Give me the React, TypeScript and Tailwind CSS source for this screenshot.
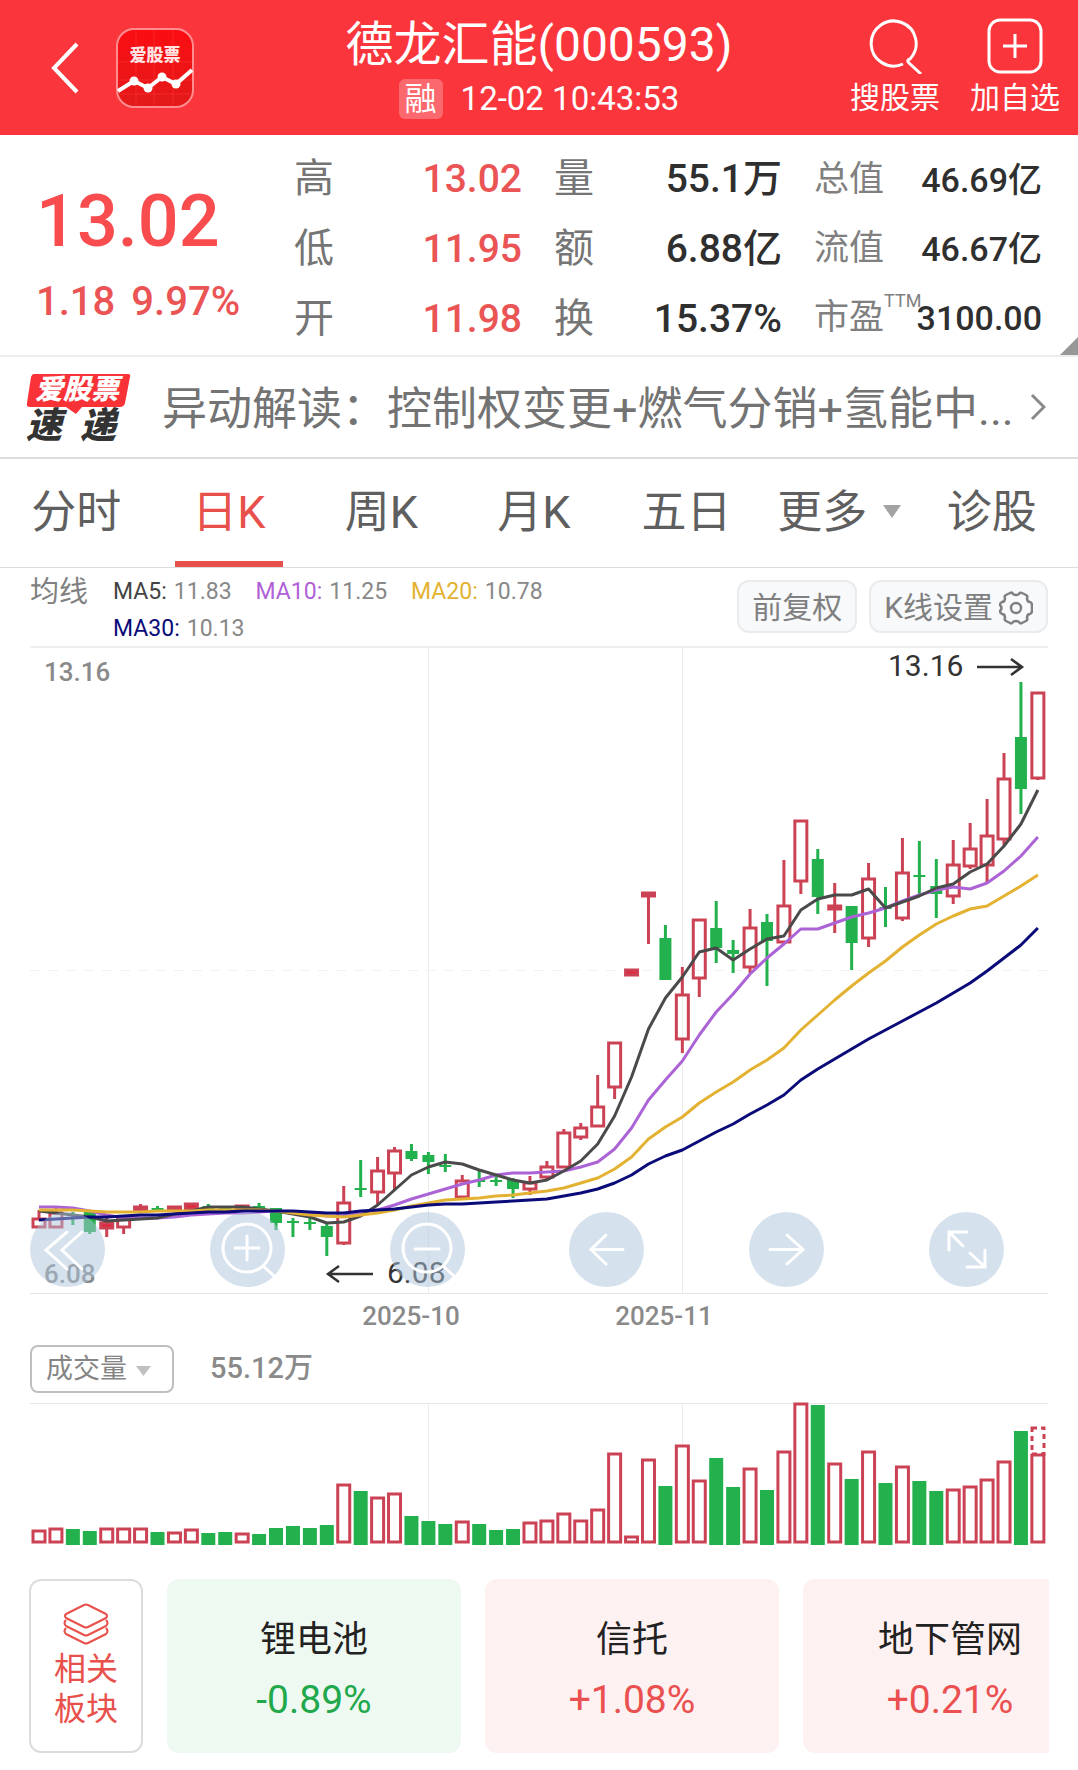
import type { ReactNode } from 'react'

type Side = 'up' | 'down'
type Candle = [side: Side, high: number, top: number, bottom: number, low: number]

const STEP = 16.93
const FIRST_X = 39
const RED = '#cc4255'
const GREEN = '#22b14c'

// high, body top, body bottom and low, in chart units
const candles: Candle[] = [
  ['up', 1210, 1219, 1227, 1227],
  ['up', 1207, 1213, 1227, 1227],
  ['down', 1212, 1214, 1216, 1225],
  ['down', 1211, 1212, 1232, 1234],
  ['up', 1218, 1223, 1228, 1237],
  ['up', 1216, 1217, 1227, 1234],
  ['up', 1204, 1207, 1210, 1211],
  ['down', 1206, 1208, 1211, 1211],
  ['up', 1206, 1207, 1210, 1210],
  ['up', 1203, 1204, 1209, 1216],
  ['down', 1204, 1206, 1209, 1210],
  ['down', 1207, 1208, 1210, 1211],
  ['up', 1205, 1206, 1208, 1210],
  ['down', 1203, 1206, 1209, 1211],
  ['down', 1208, 1208, 1223, 1230],
  ['down', 1218, 1221, 1223, 1237],
  ['down', 1217, 1222, 1224, 1230],
  ['down', 1223, 1226, 1237, 1256],
  ['up', 1186, 1203, 1243, 1245],
  ['down', 1160, 1188, 1190, 1197],
  ['up', 1157, 1171, 1192, 1204],
  ['up', 1147, 1151, 1173, 1190],
  ['down', 1144, 1151, 1159, 1161],
  ['down', 1152, 1155, 1162, 1174],
  ['down', 1154, 1165, 1167, 1172],
  ['up', 1175, 1181, 1197, 1197],
  ['down', 1171, 1180, 1182, 1187],
  ['down', 1177, 1180, 1182, 1186],
  ['down', 1178, 1180, 1189, 1198],
  ['up', 1176, 1183, 1189, 1195],
  ['up', 1161, 1167, 1177, 1180],
  ['up', 1129, 1133, 1167, 1167],
  ['up', 1123, 1128, 1137, 1140],
  ['up', 1075, 1107, 1126, 1126],
  ['up', 1043, 1043, 1087, 1099],
  ['up', 970, 970, 975, 975],
  ['up', 892, 893, 896, 944],
  ['down', 925, 938, 980, 980],
  ['up', 967, 995, 1039, 1053],
  ['up', 920, 920, 978, 997],
  ['down', 901, 928, 948, 963],
  ['down', 940, 950, 954, 973],
  ['up', 909, 928, 967, 973],
  ['down', 914, 922, 941, 986],
  ['up', 860, 906, 942, 942],
  ['up', 821, 821, 881, 894],
  ['down', 849, 859, 897, 914],
  ['up', 883, 906, 909, 933],
  ['down', 906, 906, 943, 970],
  ['up', 863, 879, 938, 947],
  ['down', 887, 907, 909, 927],
  ['up', 838, 873, 918, 921],
  ['down', 841, 875, 877, 895],
  ['down', 859, 886, 894, 918],
  ['up', 840, 865, 896, 904],
  ['up', 823, 849, 866, 869],
  ['up', 799, 836, 865, 883],
  ['up', 753, 779, 839, 845],
  ['down', 682, 737, 789, 814],
  ['up', 693, 693, 778, 780],
]

const averages = [
  {
    color: '#ab63d6',
    points: [
      1207, 1207, 1208, 1211, 1215, 1218, 1218, 1218, 1217, 1215, 1214, 1213, 1213, 1212, 1211, 1213, 1214, 1216, 1216,
      1213, 1210, 1205, 1199, 1194, 1189, 1184, 1180, 1175, 1173, 1173, 1172, 1171, 1167, 1162, 1149, 1128, 1100, 1080,
      1061, 1035, 1012, 994, 974, 958, 944, 929, 929, 923, 917, 913, 908, 901, 895, 890, 887, 889, 883, 871, 856, 837,
    ],
  },
  {
    color: '#4a4a4a',
    points: [
      1211, 1213, 1215, 1217, 1221, 1220, 1219, 1218, 1214, 1211, 1207, 1207, 1207, 1209, 1211, 1214, 1217, 1223, 1222,
      1216, 1205, 1190, 1175, 1167, 1162, 1164, 1170, 1175, 1180, 1183, 1180, 1171, 1161, 1144, 1116, 1077, 1029, 998,
      977, 952, 948, 960, 949, 939, 936, 910, 899, 895, 895, 889, 908, 902, 896, 888, 884, 872, 864, 846, 824, 790,
    ],
  },
  {
    color: '#e3b232',
    points: [
      1210, 1210, 1210, 1211, 1212, 1212, 1212, 1211, 1211, 1211, 1210, 1210, 1210, 1210, 1211, 1213, 1215, 1216, 1217,
      1215, 1213, 1210, 1206, 1203, 1200, 1199, 1198, 1196, 1195, 1193, 1191, 1188, 1183, 1178, 1169, 1157, 1139, 1127,
      1117, 1103, 1092, 1082, 1070, 1060, 1048, 1030, 1015, 1000, 986, 973, 961, 947, 935, 924, 916, 909, 906, 896, 886,
      875,
    ],
  },
  {
    color: '#0a0a78',
    points: [
      1220, 1219, 1218, 1217, 1217, 1216, 1215, 1215, 1214, 1213, 1212, 1212, 1211, 1211, 1211, 1211, 1212, 1213, 1213,
      1211, 1210, 1209, 1207, 1205, 1204, 1204, 1203, 1202, 1201, 1200, 1199, 1196, 1193, 1189, 1183, 1175, 1164, 1156,
      1150, 1141, 1132, 1124, 1114, 1105, 1095, 1080, 1069, 1059, 1049, 1039, 1030, 1021, 1012, 1003, 993, 983, 971,
      958, 945, 928,
    ],
  },
]

const volumes = [
  15, 17, 16, 14, 17, 17, 17, 13, 13, 16, 12, 13, 12, 11, 17, 19, 17, 20, 61, 54, 48, 52, 29, 24, 21, 24, 21, 15, 16,
  23, 25, 32, 25, 36, 92, 9, 86, 59, 100, 65, 87, 58, 77, 55, 94, 142, 140, 82, 66, 94, 62, 79, 64, 54, 56, 59, 66, 84,
  114, 91,
]

const quoteColumns = [
  [
    { label: '高', value: '13.02' },
    { label: '低', value: '11.95' },
    { label: '开', value: '11.98' },
  ],
  [
    { label: '量', value: '55.1万' },
    { label: '额', value: '6.88亿' },
    { label: '换', value: '15.37%' },
  ],
]

const marketValues = [
  { label: '总值', value: '46.69亿' },
  { label: '流值', value: '46.67亿' },
  { label: '市盈', note: 'TTM', value: '3100.00' },
]

const tabs = ['分时', '日K', '周K', '月K', '五日', '更多', '诊股']

const maLegend = [
  { name: 'MA5:', value: '11.83', color: 'text-[#444444]' },
  { name: 'MA10:', value: '11.25', color: 'text-[#b061d6]' },
  { name: 'MA20:', value: '10.78', color: 'text-[#e3b232]' },
  { name: 'MA30:', value: '10.13', color: 'text-[#0a0a78]' },
]

const sectors = [
  { name: '锂电池', change: '-0.89%', box: 'bg-[#eef9f2]', text: 'text-[#21a84b]' },
  { name: '信托', change: '+1.08%', box: 'bg-[#fef1f1]', text: 'text-[#ea504f]' },
  { name: '地下管网', change: '+0.21%', box: 'bg-[#fef1f1]', text: 'text-[#ea504f]' },
]

const centerX = (i: number) => FIRST_X + i * STEP

function Header() {
  return (
    <header className="grid h-[135px] grid-cols-[1fr_auto_1fr] items-center bg-[#fa363c] text-white">
      <div className="flex items-center gap-[36px] pl-[50px]">
        <button type="button" aria-label="返回">
          <svg className="h-[54px] w-[30px]" viewBox="0 0 30 54" fill="none" stroke="currentColor" strokeWidth="4">
            <path d="M27 3L4 27L27 51" />
          </svg>
        </button>
        <a href="#home" aria-label="爱股票">
          <svg className="h-[80px] w-[78px]" viewBox="0 0 78 80">
            <defs>
              <linearGradient id="logo" x1="0" y1="0" x2="0" y2="1">
                <stop offset="0" stopColor="#fb0d12" />
                <stop offset="1" stopColor="#e21a1a" />
              </linearGradient>
            </defs>
            <rect x="1" y="1" width="76" height="78" rx="17" fill="url(#logo)" stroke="#ff8d90" strokeWidth="2" />
            <path d="M2 34H76M2 52H76M2 66H76M20 2V78M38 2V78M57 2V78" stroke="#ff3a3a" strokeOpacity="0.5" />
            <text x="39" y="33" textAnchor="middle" fontSize="17" fontWeight="900" fill="#ffe3e3">
              爱股票
            </text>
            <path d="M2 63L18 53L32 60L46 49L60 56L76 42" fill="none" stroke="#fff" strokeWidth="4" />
            <g fill="#fff">
              <circle cx="18" cy="53" r="4.5" />
              <circle cx="32" cy="60" r="4.5" />
              <circle cx="46" cy="49" r="4.5" />
              <circle cx="60" cy="56" r="4.5" />
            </g>
          </svg>
        </a>
      </div>
      <div className="text-center">
        <h1 className="text-[48px] leading-[58px]">德龙汇能(000593)</h1>
        <p className="mt-[5px] flex items-center justify-center gap-[18px] text-[33px] leading-[40px]">
          <span className="rounded-md bg-white/25 px-[6px] text-[32px]">融</span>
          12-02 10:43:53
        </p>
      </div>
      <div className="flex justify-end gap-[30px] pr-[18px] text-[30px] leading-[38px]">
        <button type="button" className="flex flex-col items-center gap-[5px]">
          <svg className="h-[56px] w-[56px]" viewBox="0 0 56 56" fill="none" stroke="currentColor" strokeWidth="3">
            <path d="M36 46A22.500 22.500 0 1 1 43 41Q39 42 42 45L54 56" />
          </svg>
          搜股票
        </button>
        <button type="button" className="flex flex-col items-center gap-[5px]">
          <svg className="h-[56px] w-[56px]" viewBox="0 0 56 56" fill="none" stroke="currentColor" strokeWidth="3">
            <rect x="2" y="2" width="52" height="52" rx="11" />
            <path d="M28 16V40M16 28H40" />
          </svg>
          加自选
        </button>
      </div>
    </header>
  )
}

function Quote() {
  return (
    <section className="relative grid h-[222px] grid-cols-4 gap-x-8 border-b-2 border-[#ececec] pl-[34px] pr-9 pt-[9px]">
      <div className="pt-[38px] font-medium whitespace-nowrap text-[#f84c4e]">
        <p className="pl-[2px] text-[72px] leading-[80px]">13.02</p>
        <p className="flex gap-4 pl-[2px] text-[40px] leading-[80px] text-[#ea5455]">
          <span>1.18</span>
          <span>9.97%</span>
        </p>
      </div>
      {quoteColumns.map((rows, column) => (
        <dl key={column}>
          {rows.map((row) => (
            <div key={row.label} className="flex h-[70px] items-center justify-between">
              <dt className="text-[40px] text-[#757575]">{row.label}</dt>
              <dd
                className={
                  column === 0 ? 'text-[39px] font-medium text-[#ea5455]' : 'text-[39px] font-medium text-[#2f2f2f]'
                }
              >
                {row.value}
              </dd>
            </div>
          ))}
        </dl>
      ))}
      <dl className="pt-[2px]">
        {marketValues.map((row) => (
          <div key={row.label} className="flex h-[69px] items-center justify-between whitespace-nowrap">
            <dt className="flex text-[35px] text-[#808080]">
              {row.label}
              {row.note && <sup className="w-0 text-[18px] leading-[36px]">{row.note}</sup>}
            </dt>
            <dd className="text-[34px] font-medium text-[#2f2f2f]">{row.value}</dd>
          </div>
        ))}
      </dl>
      <svg className="absolute bottom-0 right-0 h-[18px] w-[18px]" viewBox="0 0 18 18">
        <path d="M18 0V18H0Z" fill="#979797" />
      </svg>
    </section>
  )
}

function NewsRow() {
  return (
    <a
      href="#news"
      className="flex h-[102px] items-center border-b-2 border-[#dddddd] pl-[26px] pr-[32px] text-[#737373]"
    >
      <span className="relative block h-[70px] w-[106px] shrink-0 text-center font-black italic">
        <svg className="absolute inset-0 h-[70px] w-[106px]" viewBox="0 0 106 70">
          <path d="M8 2H102Q105 2 104 5L99 31Q98 35 94 35H56L50 42L40 35H4Q0 35 1 31L5 5Q6 2 8 2Z" fill="#f93238" />
        </svg>
        <span className="relative block pr-[4px] text-[28px] leading-[36px] text-white">爱股票</span>
        <span className="relative flex justify-between pr-[16px] text-[36px] leading-[36px] text-[#333333]">
          <span>速</span>
          <span>递</span>
        </span>
      </span>
      <span className="ml-[30px] flex-1 pt-[6px] text-[45px] leading-[64px] whitespace-nowrap">
        异动解读：控制权变更+燃气分销+氢能中...
      </span>
      <svg className="h-[28px] w-[16px] shrink-0" viewBox="0 0 16 28" fill="none" stroke="#8a8a8a" strokeWidth="3">
        <path d="M2 2L14 14L2 26" />
      </svg>
    </a>
  )
}

function Tabs() {
  return (
    <nav className="grid h-[109px] grid-cols-7 border-b border-[#dcdcdc] pr-[10px]">
      {tabs.map((tab) => (
        <button
          key={tab}
          type="button"
          className={
            tab === '日K'
              ? 'flex flex-col items-center justify-between pt-[6px] text-[45px] leading-[96px] text-[#e8504c]'
              : 'flex items-start justify-center gap-[16px] pt-[6px] text-[45px] leading-[96px] whitespace-nowrap text-[#5f5f5f]'
          }
        >
          {tab}
          {tab === '日K' && <span className="h-[6px] w-[108px] bg-[#e8504c]" />}
          {tab === '更多' && (
            <svg className="mt-[40px] h-[13px] w-[18px]" viewBox="0 0 18 13">
              <path d="M0 0H18L9 13Z" fill="#a3a3a3" />
            </svg>
          )}
        </button>
      ))}
    </nav>
  )
}

function GearIcon() {
  return (
    <svg className="h-[36px] w-[34px]" viewBox="0 0 34 36" fill="none" stroke="currentColor" strokeWidth="2.5">
      <path
        d="M11 3Q13 2 14 4Q17 6 20 4Q21 2 23 3L27 5Q29 6 28 8Q28 12 31 12Q33 13 33 15V21Q33 23 31 24Q28 24 28 28Q29 30 27 31L23 33Q21 34 20 32Q17 30 14 32Q13 34 11 33L7 31Q5 30 6 28Q6 24 3 24Q1 23 1 21Q4 18 1 15Q1 13 3 12Q6 12 6 8Q5 6 7 5Z"
        strokeLinejoin="round"
      />
      <circle cx="17" cy="18" r="5" />
    </svg>
  )
}

function Legend() {
  return (
    <div className="flex h-[78px] items-start justify-between px-[30px] pt-[5px]">
      <div className="flex">
        <span className="w-[83px] text-[29px] leading-[39px] text-[#808080]">均线</span>
        <ul className="flex max-w-[460px] flex-wrap gap-x-[24px] text-[23px] leading-[37px]">
          {maLegend.map((ma) => (
            <li key={ma.name} className="flex gap-[7px]">
              <span className={ma.color}>{ma.name}</span>
              <span className="text-[#888888]">{ma.value}</span>
            </li>
          ))}
        </ul>
      </div>
      <div className="mt-[7px] flex gap-[12px] text-[30px] leading-[46px] text-[#808080]">
        <button type="button" className="rounded-xl border-2 border-[#e9ebed] bg-[#f8f9fb] px-[13px] pt-[3px]">
          前复权
        </button>
        <button
          type="button"
          className="flex items-center gap-[6px] rounded-xl border-2 border-[#e9ebed] bg-[#f8f9fb] px-[13px] pt-[3px]"
        >
          <span>K线设置</span>
          <GearIcon />
        </button>
      </div>
    </div>
  )
}

function CandleMark({ candle, x }: { candle: Candle; x: number }) {
  const [side, high, top, bottom, low] = candle
  if (side === 'down') {
    return (
      <g fill={GREEN}>
        <rect x={x - 1.5} y={high} width="3" height={low - high} />
        <rect x={x - 6} y={top} width="12" height={bottom - top} />
      </g>
    )
  }
  return (
    <g fill={bottom - top < 6 ? '#e0283d' : 'none'} stroke={RED} strokeWidth="3">
      <path d={`M${x} ${high}V${top}M${x} ${bottom}V${low}`} />
      <rect x={x - 6} y={top} width="12" height={bottom - top} />
    </g>
  )
}

function ToolButton({ label, children }: { label: string; children: ReactNode }) {
  return (
    <button type="button" aria-label={label} className="h-[75px] w-[75px] rounded-full bg-[#abc3d9]/50">
      <svg
        className="h-[75px] w-[75px]"
        viewBox="0 0 75 75"
        fill="none"
        stroke="#fff"
        strokeWidth="3"
        strokeLinecap="round"
      >
        {children}
      </svg>
    </button>
  )
}

function PriceChart() {
  return (
    <div className="relative mx-[30px]">
      <svg className="block w-full" viewBox="30 646 1018 690">
        <path d="M30 647H1048" stroke="#efefef" strokeWidth="2" />
        <path d="M30 1293.500H1048" stroke="#e2e6e6" />
        <path d="M428.500 648V1293M682.500 648V1293" stroke="#ececec" />
        <path d="M30 970.500H1048" stroke="#f2f2f2" strokeDasharray="10 8" />
        <g fontSize="26" fontWeight="500" fill="#8a8a8a">
          <text x="44" y="681">13.16</text>
          <text x="44" y="1283">6.08</text>
          <text x="411" y="1325" textAnchor="middle">2025-10</text>
          <text x="664" y="1325" textAnchor="middle">2025-11</text>
        </g>
        {candles.map((candle, i) => (
          <CandleMark key={i} candle={candle} x={centerX(i)} />
        ))}
        {averages.map((line) => (
          <polyline
            key={line.color}
            points={line.points.map((y, i) => `${centerX(i)},${y}`).join(' ')}
            fill="none"
            stroke={line.color}
            strokeWidth="3"
            strokeLinejoin="round"
          />
        ))}
        <g fontSize="30" fill="#333">
          <text x="888" y="676">13.16</text>
          <text x="387" y="1283">6.08</text>
        </g>
        <g fill="none" stroke="#333" strokeWidth="2.500">
          <path d="M977 667H1022M1011 659L1022 667L1011 675" />
          <path d="M373 1274H328M339 1266L328 1274L339 1282" />
        </g>
      </svg>
      <div className="absolute bottom-[49px] left-0 right-[44px] flex justify-between">
        <ToolButton label="最早">
          <path d="M37 20L16 38L37 57M52 20L32 38L52 57" />
        </ToolButton>
        <ToolButton label="放大">
          <circle cx="37" cy="36" r="24" />
          <path d="M37 24V48M25 36H49M53 54L64 64" />
        </ToolButton>
        <ToolButton label="缩小">
          <circle cx="37" cy="36" r="24" />
          <path d="M25 37H49M53 54L64 64" />
        </ToolButton>
        <ToolButton label="左移">
          <path d="M54 37.500H22M37 23L22 37.500L37 52" />
        </ToolButton>
        <ToolButton label="右移">
          <path d="M21 37.500H54M38 23L54 37.500L38 52" />
        </ToolButton>
        <ToolButton label="全屏">
          <path d="M38 20H20V38M20 20L34 34M41 41L56 55M56 38V55H38" />
        </ToolButton>
      </div>
    </div>
  )
}

function VolumeChart() {
  return (
    <section className="mx-[30px]">
      <div className="flex h-[66px] items-start gap-[36px] pt-[9px]">
        <div className="relative">
          <select
            aria-label="指标"
            className="h-[48px] w-[144px] appearance-none rounded-lg border-2 border-[#bfbfbf] bg-white pl-[14px] text-[27px] text-[#858585]"
          >
            <option>成交量</option>
          </select>
          <svg className="absolute right-[23px] top-[21px] h-[10px] w-[15px]" viewBox="0 0 15 10">
            <path d="M0 0H15L7.500 10Z" fill="#c0c0c0" />
          </svg>
        </div>
        <span className="text-[29px] leading-[47px] font-medium text-[#8a8a8a]">55.12万</span>
      </div>
      <svg className="block w-full" viewBox="30 1402 1018 144">
        <path d="M30 1403.500H1048" stroke="#e6e6e6" />
        <path d="M428.500 1404V1545M682.500 1404V1545" stroke="#ececec" />
        {volumes.map((height, i) => {
          const x = centerX(i)
          const top = 1545 - height
          return candles[i][0] === 'down' ? (
            <rect key={i} x={x - 7} y={top} width="14" height={height} fill={GREEN} />
          ) : (
            <rect
              key={i}
              x={x - 6}
              y={top + 1}
              width="12"
              height={height - 4}
              fill="#fff"
              stroke={RED}
              strokeWidth="3"
            />
          )
        })}
        <rect x="1032" y="1428" width="12" height="26" fill="none" stroke={RED} strokeWidth="3" strokeDasharray="5 4" />
      </svg>
    </section>
  )
}

function RelatedSectors() {
  return (
    <section className="mx-[29px] mt-[33px] flex gap-[24px] overflow-hidden pb-[17px]">
      <button
        type="button"
        className="flex h-[174px] w-[114px] shrink-0 flex-col items-center justify-center rounded-xl border-2 border-[#dcdcdc] text-[32px] leading-[40px] text-[#e8504c]"
      >
        <svg
          className="mb-[4px] h-[42px] w-[46px]"
          viewBox="0 0 46 42"
          fill="none"
          stroke="currentColor"
          strokeWidth="2"
          strokeLinejoin="round"
        >
          <path d="M21 2Q23 1 25 2L43 11Q45 13 43 15L25 24Q23 25 21 24L3 15Q1 13 3 11Z" />
          <path d="M3 17Q0 20 3 23L21 32Q23 33 25 32L43 23Q46 20 43 17" />
          <path d="M3 25Q0 28 3 31L21 40Q23 41 25 40L43 31Q46 28 43 25" />
        </svg>
        <span>相关</span>
        <span>板块</span>
      </button>
      {sectors.map((sector) => (
        <a
          key={sector.name}
          href="#sector"
          className={`flex h-[174px] w-[294px] shrink-0 flex-col items-center justify-center rounded-xl pt-2 ${sector.box}`}
        >
          <span className="text-[36px] leading-[60px] text-[#222222]">{sector.name}</span>
          <span className={`text-[39px] leading-[60px] ${sector.text}`}>{sector.change}</span>
        </a>
      ))}
    </section>
  )
}

export default function App() {
  return (
    <main className="min-h-screen bg-white font-[Roboto,'Noto_Sans_CJK_SC',sans-serif]">
      <Header />
      <Quote />
      <NewsRow />
      <Tabs />
      <Legend />
      <PriceChart />
      <VolumeChart />
      <RelatedSectors />
    </main>
  )
}
